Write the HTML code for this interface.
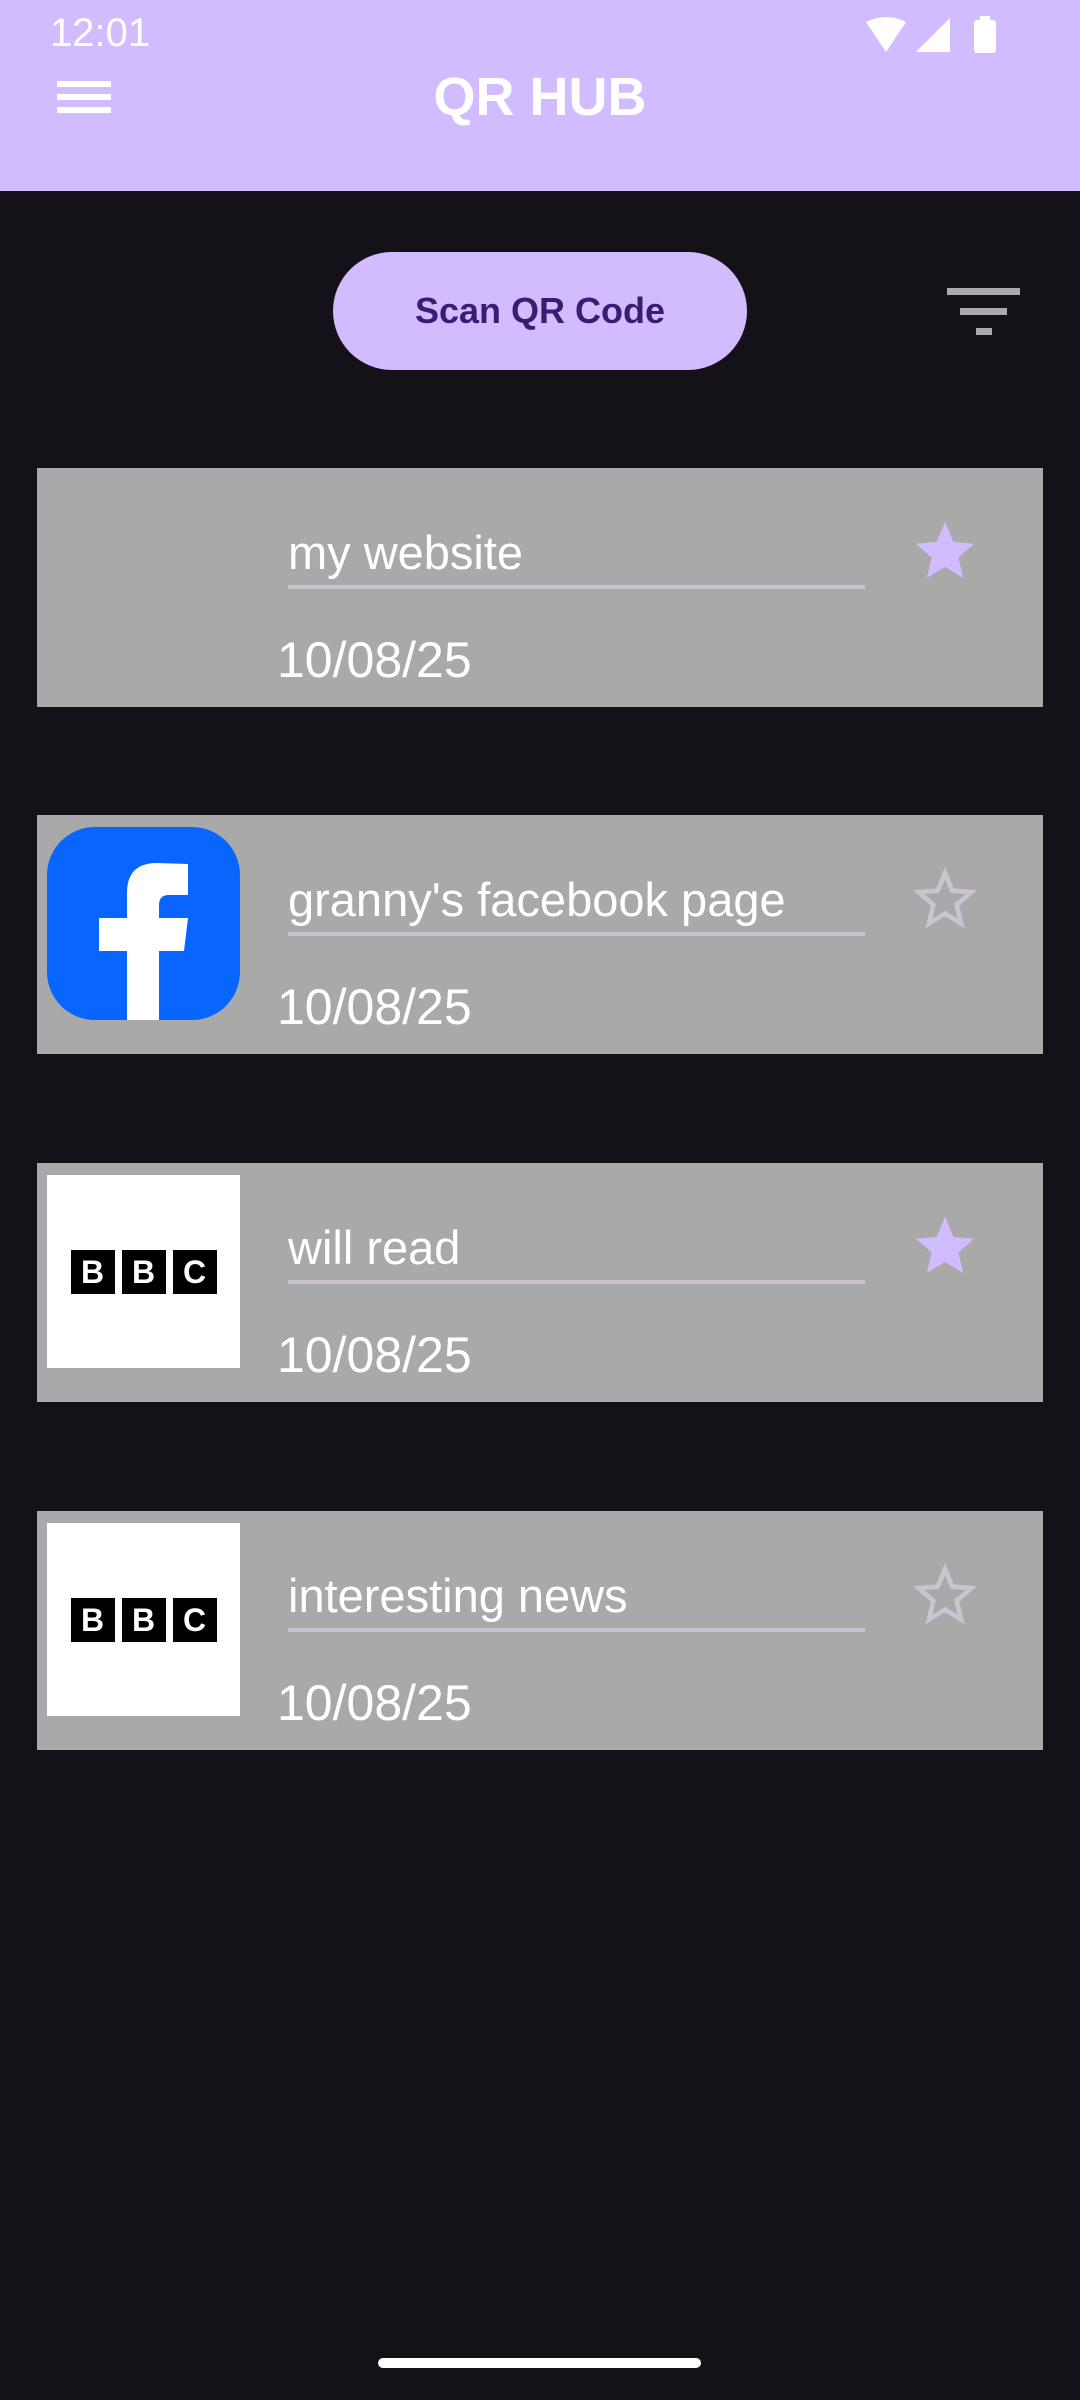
<!DOCTYPE html>
<html><head><meta charset="utf-8"><style>
*{margin:0;padding:0;box-sizing:border-box}
body{width:1080px;height:2400px;background:#141218;position:relative;overflow:hidden;font-family:"Liberation Sans",sans-serif}
.hdr{position:absolute;left:0;top:0;width:1080px;height:191px;background:#d0bcff}
.time{position:absolute;left:50px;top:11px;font-size:40px;color:#fff}
.title{position:absolute;left:0;width:1080px;top:66px;text-align:center;font-size:54px;font-weight:bold;color:#fff}
.ham{position:absolute;left:57px;width:54px;height:6px;background:#fff}
.btn{position:absolute;left:333px;top:252px;width:414px;height:118px;border-radius:59px;background:#d0bcff;color:#381e72;font-size:36px;font-weight:bold;text-align:center;line-height:118px}
.fl{position:absolute;background:#aaa;height:6px}
.card{position:absolute;left:37px;width:1006px;height:239px;background:#a9a9a9}
.img{position:absolute;left:10px;top:12px;width:193px;height:193px}
.lbl{position:absolute;left:251px;top:57px;font-size:47px;color:#fff}
.ul{position:absolute;left:251px;top:117px;width:577px;height:4px;background:#cac4d0}
.dt{position:absolute;left:240px;top:163px;font-size:50px;color:#fff}
.star{position:absolute;left:872px;top:48px;width:72px;height:70px}
.bbc{display:flex;gap:7px;justify-content:center;align-items:center;height:100%}
.bbc span{width:44px;height:44px;background:#000;color:#fff;font-weight:bold;font-size:32px;line-height:44px;text-align:center}
</style></head><body>
<div class="hdr">
<div class="time">12:01</div>
<svg style="position:absolute;left:864px;top:16px" width="140" height="38" viewBox="0 0 140 38">
<path d="M2 6 Q22 -4 42 6 L22 36 Z" fill="#fff"/>
<path d="M52 36 L86 2 L86 36 Z" fill="#fff"/>
<rect x="110" y="4" width="22" height="33" rx="3" fill="#fff"/><rect x="116" y="0" width="10" height="6" fill="#fff"/>
</svg>
<div class="ham" style="top:81px"></div><div class="ham" style="top:94px"></div><div class="ham" style="top:107px"></div>
<div class="title">QR HUB</div>
</div>
<div class="btn">Scan QR Code</div>
<div class="fl" style="left:947px;top:288px;width:73px;height:7px"></div>
<div class="fl" style="left:960px;top:308px;width:47px;height:7px"></div>
<div class="fl" style="left:976px;top:328px;width:16px;height:7px"></div>

<div class="card" style="top:468px">
<div class="lbl">my website</div><div class="ul"></div><div class="dt">10/08/25</div>
<svg class="star" viewBox="0 0 24 24"><path d="M12 2l2.9 6.9 7.1.6-5.4 4.7 1.6 7L12 17.5 5.8 21.2l1.6-7L2 9.5l7.1-.6z" fill="#d0bcff"/></svg>
</div>

<div class="card" style="top:815px">
<div class="img"><svg width="193" height="193" viewBox="0 0 193 193"><rect width="193" height="193" rx="48" fill="#0866ff"/><path d="M80 193V124H52V91H80V66Q80 36 110 36L141 37V68H122Q112 68 112 78V91H141L137 124H112V193Z" fill="#fff"/></svg></div>
<div class="lbl">granny's facebook page</div><div class="ul"></div><div class="dt">10/08/25</div>
<svg class="star" viewBox="0 0 24 24"><path d="M12 3.5l2.5 6 6.5.5-5 4.3 1.5 6.4L12 17.3l-5.5 3.4 1.5-6.4-5-4.3 6.5-.5z" fill="none" stroke="#cac4d0" stroke-width="1.6"/></svg>
</div>

<div class="card" style="top:1163px">
<div class="img" style="background:#fff"><div class="bbc"><span>B</span><span>B</span><span>C</span></div></div>
<div class="lbl">will read</div><div class="ul"></div><div class="dt">10/08/25</div>
<svg class="star" viewBox="0 0 24 24"><path d="M12 2l2.9 6.9 7.1.6-5.4 4.7 1.6 7L12 17.5 5.8 21.2l1.6-7L2 9.5l7.1-.6z" fill="#d0bcff"/></svg>
</div>

<div class="card" style="top:1511px">
<div class="img" style="background:#fff"><div class="bbc"><span>B</span><span>B</span><span>C</span></div></div>
<div class="lbl">interesting news</div><div class="ul"></div><div class="dt">10/08/25</div>
<svg class="star" viewBox="0 0 24 24"><path d="M12 3.5l2.5 6 6.5.5-5 4.3 1.5 6.4L12 17.3l-5.5 3.4 1.5-6.4-5-4.3 6.5-.5z" fill="none" stroke="#cac4d0" stroke-width="1.6"/></svg>
</div>

<div style="position:absolute;left:378px;top:2358px;width:323px;height:10px;border-radius:5px;background:#fff"></div>
</body></html>
